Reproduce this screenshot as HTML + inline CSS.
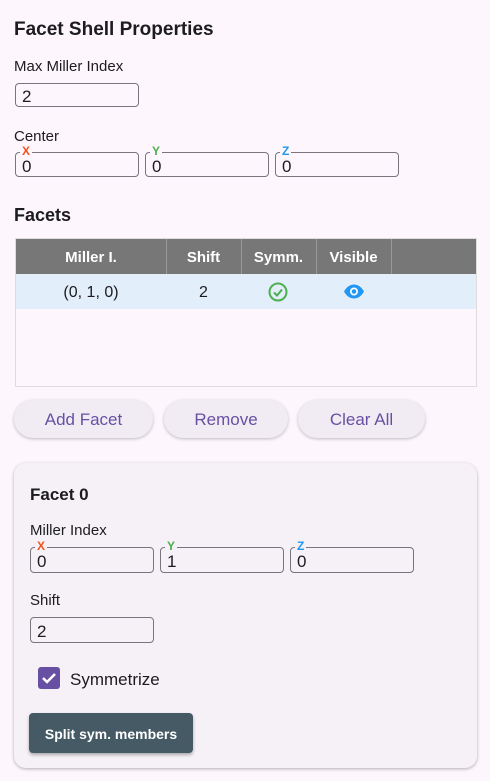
<html><head><style>
body{margin:0;width:490px;height:781px;background:#fdf7fd;font-family:"Liberation Sans",sans-serif;color:#1c1b1f;position:relative;overflow:hidden}
.a{position:absolute}
.in{position:absolute;height:23px;border:1px solid #79747e;border-radius:4px;box-sizing:border-box;font-size:17px;line-height:27px;padding-left:6px}
.lb{position:absolute;font-size:12px;font-weight:bold;top:-8px;left:4px;background:inherit;padding:0 2px;line-height:12px}
.btn{position:absolute;top:400px;height:38px;border-radius:19px;background:#f1ecf4;color:#6750a4;font-size:17px;text-align:center;line-height:40px;box-shadow:0 1px 3px rgba(0,0,0,.25)}
.th{position:absolute;top:0;height:35px;line-height:37px;color:#fff;font-weight:bold;font-size:15px;text-align:center;border-right:1px solid #999}
</style></head><body>
<div class="a" style="left:14px;top:19px;font-size:19px;font-weight:bold">Facet Shell Properties</div>
<div class="a" style="left:14px;top:58px;font-size:15px">Max Miller Index</div>
<div class="in" style="left:15px;top:83px;width:124px;height:24px;line-height:25px">2</div>
<div class="a" style="left:14px;top:128px;font-size:15px">Center</div>
<div class="in" style="left:15px;top:152px;width:124px;height:25px;background:#fdf7fd"><span class="lb" style="color:#f4511e">X</span>0</div>
<div class="in" style="left:145px;top:152px;width:124px;height:25px;background:#fdf7fd"><span class="lb" style="color:#4caf50">Y</span>0</div>
<div class="in" style="left:275px;top:152px;width:124px;height:25px;background:#fdf7fd"><span class="lb" style="color:#2196f3">Z</span>0</div>
<div class="a" style="left:14px;top:205px;font-size:18px;font-weight:bold">Facets</div>
<div class="a" style="left:15px;top:238px;width:462px;height:149px;border:1px solid #ddd;box-sizing:border-box;background:#fdf7fd">
<div class="a" style="left:0;top:0;width:460px;height:35px;background:#777"></div>
<div class="th" style="left:0;width:150px">Miller I.</div>
<div class="th" style="left:150px;width:75px">Shift</div>
<div class="th" style="left:225px;width:75px">Symm.</div>
<div class="th" style="left:300px;width:75px">Visible</div>
<div class="a" style="left:0;top:35px;width:460px;height:35px;background:#e3eefb;font-size:16px;line-height:38px">
<div class="a" style="left:0;width:150px;text-align:center">(0, 1, 0)</div>
<div class="a" style="left:150px;width:75px;text-align:center">2</div>
<svg class="a" style="left:252px;top:8px" width="20" height="20" viewBox="0 0 20 20"><circle cx="10" cy="10" r="8.5" fill="none" stroke="#4caf50" stroke-width="2"/><path d="M6 10.5l3 3 5-6" fill="none" stroke="#4caf50" stroke-width="2"/></svg>
<svg class="a" style="left:327px;top:10px" width="22" height="15" viewBox="0 0 22 15"><path d="M1 7.5C4 2 8 0.5 11 0.5S18 2 21 7.5C18 13 14 14.5 11 14.5S4 13 1 7.5Z" fill="#2196f3"/><circle cx="11" cy="7.5" r="4" fill="#fff"/><circle cx="11" cy="7.5" r="2.3" fill="#2196f3"/></svg>
</div></div>
<div class="btn" style="left:14px;width:139px">Add Facet</div>
<div class="btn" style="left:164px;width:124px">Remove</div>
<div class="btn" style="left:298px;width:127px">Clear All</div>
<div class="a" style="left:14px;top:463px;width:463px;height:305px;background:#f5f1f7;border-radius:12px;box-shadow:0 1px 3px rgba(0,0,0,.3)"></div>
<div class="a" style="left:30px;top:485px;font-size:17px;font-weight:bold">Facet 0</div>
<div class="a" style="left:30px;top:522px;font-size:15px">Miller Index</div>
<div class="in" style="left:30px;top:547px;width:124px;height:26px;background:#f5f1f7"><span class="lb" style="color:#f4511e">X</span>0</div>
<div class="in" style="left:160px;top:547px;width:124px;height:26px;background:#f5f1f7"><span class="lb" style="color:#4caf50">Y</span>1</div>
<div class="in" style="left:290px;top:547px;width:124px;height:26px;background:#f5f1f7"><span class="lb" style="color:#2196f3">Z</span>0</div>
<div class="a" style="left:30px;top:592px;font-size:15px">Shift</div>
<div class="in" style="left:30px;top:617px;width:124px;height:26px">2</div>
<div class="a" style="left:38px;top:667px;width:22px;height:22px;background:#6750a4;border-radius:3px"><svg width="22" height="22"><path d="M5 11l4 4 8-8" fill="none" stroke="#fff" stroke-width="2.5"/></svg></div>
<div class="a" style="left:70px;top:670px;font-size:17px">Symmetrize</div>
<div class="a" style="left:29px;top:713px;width:164px;height:40px;background:#455a64;border-radius:4px;color:#fff;font-weight:bold;font-size:14px;line-height:42px;text-align:center;box-shadow:0 2px 3px rgba(0,0,0,.3)">Split sym. members</div>
</body></html>
